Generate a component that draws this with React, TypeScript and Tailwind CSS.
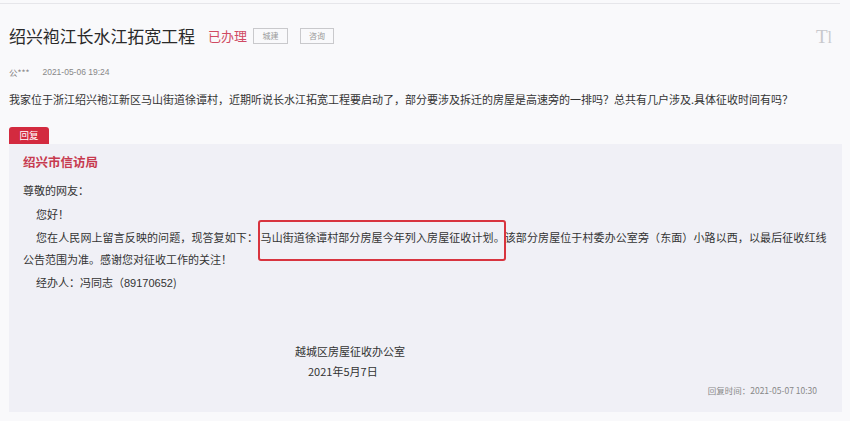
import React from "react";

const cjk = { fontFamily: '"Noto Sans CJK SC", "Noto Sans", sans-serif' };

export default function App() {
  return (
    <div
      className="relative w-[850px] h-[421px] overflow-hidden bg-[#f9f9fb] text-[#333]"
      style={cjk}
    >
      <div className="mt-[3px] w-[840px] h-px bg-[#e6e6ea]" />

      {/* header */}
      <div className="flex items-center h-[24px] mt-[20px] pl-[9px] pr-[18px]">
        <h1 className="text-[17px] leading-[24px] text-[#2a2a2a] tracking-[-0.1px]">
          绍兴袍江长水江拓宽工程
        </h1>
        <span className="ml-[13px] text-[13px] leading-[20px] text-[#d04a63]">已办理</span>
        <span className="ml-[6px] w-[35px] h-[16px] border border-[#c9c9cc] flex items-center justify-center text-[8px] text-[#9a9a9a]">
          城建
        </span>
        <span className="ml-[12px] w-[34px] h-[16px] border border-[#c9c9cc] flex items-center justify-center text-[8px] text-[#9a9a9a]">
          咨询
        </span>
        <span
          className="ml-auto text-[19px] text-[#c8c8cc] leading-none"
          style={{ fontFamily: '"Liberation Serif", serif' }}
        >
          T<span className="text-[16px]">l</span>
        </span>
      </div>

      {/* meta */}
      <div className="flex items-center mt-[17px] pl-[9px] h-[14px] text-[8.5px] text-[#888]">
        <span>公***</span>
        <span className="ml-[13px]" style={{ fontFamily: '"Liberation Sans", sans-serif' }}>
          2021-05-06 19:24
        </span>
      </div>

      {/* question */}
      <p className="mt-[12px] pl-[9px] text-[11px] leading-[16px] whitespace-nowrap text-[#333]">
        我家位于浙江绍兴袍江新区马山街道徐谭村，近期听说长水江拓宽工程要启动了，部分要涉及拆迁的房屋是高速旁的一排吗？总共有几户涉及.具体征收时间有吗？
      </p>

      {/* reply */}
      <div className="mt-[20px] ml-[9px] w-[833px]">
        <div className="w-[40px] h-[17px] bg-[#d32a3f] rounded-t-[3px] flex items-center justify-center text-[9.5px] text-white">
          回复
        </div>
        <div className="h-[268px] bg-[#f0f0f6] pl-[14px] pr-[12px] pt-[8px] text-[11px] text-[#333]">
          <div className="text-[12.5px] leading-[20px] font-bold text-[#c73a4f]">绍兴市信访局</div>
          <div className="mt-[7px] leading-[23px]">尊敬的网友：</div>
          <div className="leading-[24px] pl-[13px]">您好！</div>
          <div className="leading-[23px] pl-[13px] whitespace-nowrap tracking-[0.1px]">
            您在人民网上留言反映的问题，现答复如下：&nbsp;马山街道徐谭村部分房屋今年列入房屋征收计划。该部分房屋位于村委办公室旁（东面）小路以西，以最后征收红线
          </div>
          <div className="leading-[21px]">公告范围为准。感谢您对征收工作的关注！</div>
          <div className="leading-[24px] pl-[13px]">
            经办人：冯同志（<span style={{ fontFamily: '"Liberation Sans", sans-serif' }}>89170652</span>)
          </div>
          <div className="mt-[46px] leading-[21px] pl-[272px]">越城区房屋征收办公室</div>
          <div className="leading-[19px] pl-[285px]">2021年5月7日</div>
          <div className="mt-[2px] pr-[13px] flex justify-end text-[8.5px] text-[#888] leading-[14px]">
            回复时间：2021-05-07 10:30
          </div>
        </div>
      </div>

      {/* annotation box */}
      <div className="absolute left-[258px] top-[220px] w-[248px] h-[41px] border-2 border-[#d8343f] rounded-[3px]" />
    </div>
  );
}
